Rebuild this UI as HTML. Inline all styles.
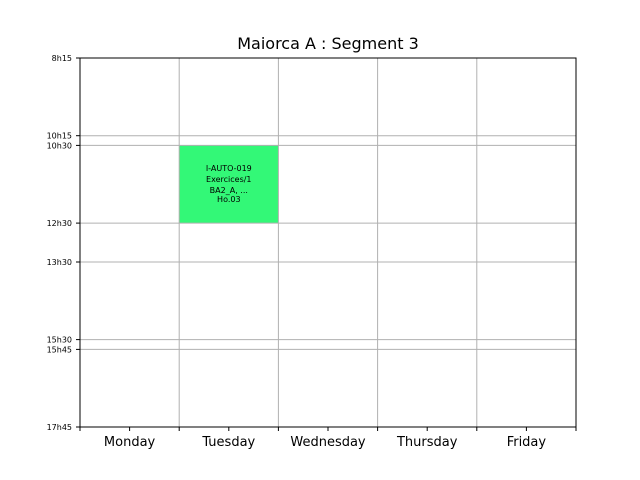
<!DOCTYPE html>
<html><head><style>body{margin:0;background:#fff}svg{display:block}</style></head><body>
<svg width="640" height="480" xmlns="http://www.w3.org/2000/svg" font-family="DejaVu Sans, Liberation Sans, sans-serif">
<rect width="640" height="480" fill="#fff"/>
<text x="328" y="49" font-size="16" text-anchor="middle" fill="#000">Maiorca A : Segment 3</text>
<rect x="179.2" y="145.4" width="99.2" height="77.7" fill="#33f877"/>
<g stroke="#b0b0b0" stroke-width="1">
<line x1="179.2" y1="58" x2="179.2" y2="427"/>
<line x1="278.4" y1="58" x2="278.4" y2="427"/>
<line x1="377.6" y1="58" x2="377.6" y2="427"/>
<line x1="476.8" y1="58" x2="476.8" y2="427"/>
<line x1="80" y1="135.7" x2="576" y2="135.7"/>
<line x1="80" y1="145.4" x2="576" y2="145.4"/>
<line x1="80" y1="223.1" x2="576" y2="223.1"/>
<line x1="80" y1="262" x2="576" y2="262"/>
<line x1="80" y1="339.6" x2="576" y2="339.6"/>
<line x1="80" y1="349.4" x2="576" y2="349.4"/>
</g>
<rect x="80" y="58" width="496" height="369" fill="none" stroke="#000" stroke-width="1"/>
<g stroke="#000" stroke-width="1">
<line x1="76" y1="58" x2="80" y2="58"/><line x1="76" y1="135.7" x2="80" y2="135.7"/><line x1="76" y1="145.4" x2="80" y2="145.4"/><line x1="76" y1="223.1" x2="80" y2="223.1"/><line x1="76" y1="262" x2="80" y2="262"/><line x1="76" y1="339.6" x2="80" y2="339.6"/><line x1="76" y1="349.4" x2="80" y2="349.4"/><line x1="76" y1="427" x2="80" y2="427"/>
<line x1="80" y1="427" x2="80" y2="431"/><line x1="129.6" y1="427" x2="129.6" y2="431"/><line x1="179.2" y1="427" x2="179.2" y2="431"/><line x1="228.8" y1="427" x2="228.8" y2="431"/><line x1="278.4" y1="427" x2="278.4" y2="431"/><line x1="328" y1="427" x2="328" y2="431"/><line x1="377.6" y1="427" x2="377.6" y2="431"/><line x1="427.2" y1="427" x2="427.2" y2="431"/><line x1="476.8" y1="427" x2="476.8" y2="431"/><line x1="526.4" y1="427" x2="526.4" y2="431"/><line x1="576" y1="427" x2="576" y2="431"/>
</g>
<g font-size="8" text-anchor="end" fill="#000">
<text x="72" y="61">8h15</text><text x="72" y="138.7">10h15</text><text x="72" y="148.4">10h30</text><text x="72" y="226.1">12h30</text><text x="72" y="265">13h30</text><text x="72" y="342.6">15h30</text><text x="72" y="352.4">15h45</text><text x="72" y="430">17h45</text>
</g>
<g font-size="13" text-anchor="middle" fill="#000">
<text x="129.6" y="446">Monday</text><text x="228.8" y="446">Tuesday</text><text x="328" y="446">Wednesday</text><text x="427.2" y="446">Thursday</text><text x="526.4" y="446">Friday</text>
</g>
<g font-size="8" text-anchor="middle" fill="#000">
<text x="228.8" y="171">I-AUTO-019</text><text x="228.8" y="182">Exercices/1</text><text x="228.8" y="193">BA2_A, ...</text><text x="228.8" y="202">Ho.03</text>
</g>
</svg>
</body></html>
